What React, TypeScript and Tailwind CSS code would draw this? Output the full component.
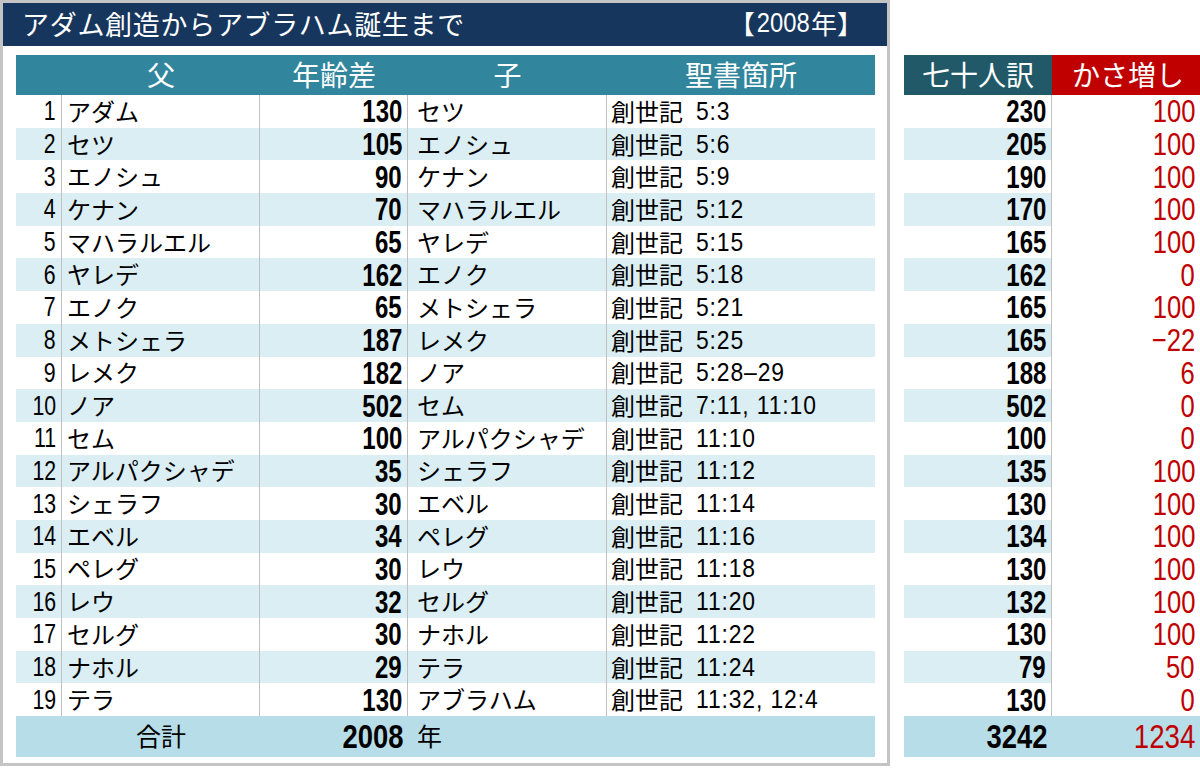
const jp = "font-['Noto_Sans_CJK_JP',sans-serif]"
const num = "font-['Liberation_Sans',Arial,sans-serif]"

const rows: [number, string, number, string, string, number, number][] = [
  [1, "アダム", 130, "セツ", "5:3", 230, 100],
  [2, "セツ", 105, "エノシュ", "5:6", 205, 100],
  [3, "エノシュ", 90, "ケナン", "5:9", 190, 100],
  [4, "ケナン", 70, "マハラルエル", "5:12", 170, 100],
  [5, "マハラルエル", 65, "ヤレデ", "5:15", 165, 100],
  [6, "ヤレデ", 162, "エノク", "5:18", 162, 0],
  [7, "エノク", 65, "メトシェラ", "5:21", 165, 100],
  [8, "メトシェラ", 187, "レメク", "5:25", 165, -22],
  [9, "レメク", 182, "ノア", "5:28–29", 188, 6],
  [10, "ノア", 502, "セム", "7:11, 11:10", 502, 0],
  [11, "セム", 100, "アルパクシャデ", "11:10", 100, 0],
  [12, "アルパクシャデ", 35, "シェラフ", "11:12", 135, 100],
  [13, "シェラフ", 30, "エベル", "11:14", 130, 100],
  [14, "エベル", 34, "ペレグ", "11:16", 134, 100],
  [15, "ペレグ", 30, "レウ", "11:18", 130, 100],
  [16, "レウ", 32, "セルグ", "11:20", 132, 100],
  [17, "セルグ", 30, "ナホル", "11:22", 130, 100],
  [18, "ナホル", 29, "テラ", "11:24", 79, 50],
  [19, "テラ", 130, "アブラハム", "11:32, 12:4", 130, 0],
]

const leftCols = "grid grid-cols-[46px_198px_148px_199px_268px]"
const rightCols = "grid grid-cols-[148px_148px]"

// condensed digits, squeezed toward the right edge of the cell
function Fig({ children, cls }: { children: React.ReactNode; cls: string }) {
  return <span className={`inline-block origin-right leading-none ${num} ${cls}`}>{children}</span>
}

const boldFig = "font-bold text-[32px] scale-x-[0.75]"
const redFig = "text-[32px] scale-x-[0.8]"

export default function App() {
  return (
    <div className={`flex w-[1200px] h-[768px] bg-white text-black ${jp}`}>
      {/* main table panel */}
      <div className="flex flex-col w-[890px] h-[766px] border-[3px] border-[#c4c4c4] bg-white">
        <div className="flex items-center justify-between h-[43px] bg-[#17365d] text-white pl-[19px] pr-[24px] pb-[3px]">
          <span className="text-[27px] leading-none tracking-[0.7px]">アダム創造からアブラハム誕生まで</span>
          <span className="flex items-center text-[26px] leading-none">
            【
            <span className={`inline-block -mx-[3px] scale-x-[0.85] ${num} text-[28px]`}>2008</span>
            年】
          </span>
        </div>

        <div className="mt-[9px] ml-[13px] w-[859px]">
          <div className={`${leftCols} h-[40px] bg-[#31859c] text-white text-[28px] leading-none`}>
            <div />
            <div className="flex items-center justify-center pb-[3px]">父</div>
            <div className="flex items-center justify-center pb-[3px]">年齢差</div>
            <div className="flex items-center justify-center pb-[3px]">子</div>
            <div className="flex items-center justify-center pb-[3px]">聖書箇所</div>
          </div>

          {rows.map(([n, father, diff, child, ref]) => (
            <div
              key={n}
              className={`${leftCols} h-[32.7px] leading-none ${n % 2 === 0 ? "bg-[#daeef3]" : "bg-white"}`}
            >
              <div className="flex items-center justify-end pr-[5px] border-r border-[#c0c0c0]">
                <Fig cls="text-[28px] scale-x-[0.76]">{n}</Fig>
              </div>
              <div className="flex items-center pl-[5px] pb-[1px] border-r border-[#c0c0c0] text-[24px]">{father}</div>
              <div className="flex items-center justify-end pr-[5px] border-r border-[#c0c0c0]">
                <Fig cls={boldFig}>{diff}</Fig>
              </div>
              <div className="flex items-center pl-[9px] pb-[1px] border-r border-[#c0c0c0] text-[24px]">{child}</div>
              <div className="flex items-center pl-[4px] pb-[1px] text-[24px]">
                創世記
                <span className={`inline-block ml-[13px] ${num} text-[26px] tracking-[1px] scale-x-[0.88] origin-left`}>
                  {ref}
                </span>
              </div>
            </div>
          ))}

          <div className={`${leftCols} h-[41px] bg-[#b7dee8] leading-none`}>
            <div />
            <div className="flex items-center justify-center pb-[2px] text-[25px]">合計</div>
            <div className="flex items-center justify-end pr-[5px]">
              <Fig cls="font-bold text-[33px] scale-x-[0.83]">2008</Fig>
            </div>
            <div className="flex items-center pl-[9px] pb-[2px] text-[25px]">年</div>
            <div />
          </div>
        </div>
      </div>

      {/* septuagint comparison */}
      <div className="ml-[14px] mt-[55px] w-[296px]">
        <div className={`${rightCols} h-[40px] text-white text-[28px] leading-none`}>
          <div className="flex items-center justify-center pb-[3px] bg-[#215968]">七十人訳</div>
          <div className="flex items-center justify-center pb-[3px] pl-[4px] bg-[#c00000]">かさ増し</div>
        </div>
        {rows.map(([n, , , , , lxx, extra]) => (
          <div key={n} className={`${rightCols} h-[32.7px]`}>
            <div
              className={`flex items-center justify-end pr-[5px] border-r border-[#c0c0c0] ${
                n % 2 === 0 ? "bg-[#daeef3]" : "bg-white"
              }`}
            >
              <Fig cls={boldFig}>{lxx}</Fig>
            </div>
            <div className="flex items-center justify-end pr-[5px] text-[#c00000]">
              <Fig cls={redFig}>{extra < 0 ? `−${-extra}` : extra}</Fig>
            </div>
          </div>
        ))}
        <div className={`${rightCols} h-[41px] bg-[#b7dee8]`}>
          <div className="flex items-center justify-end pr-[5px]">
            <Fig cls="font-bold text-[33px] scale-x-[0.83]">3242</Fig>
          </div>
          <div className="flex items-center justify-end pr-[5px] text-[#c00000]">
            <Fig cls="text-[33px] scale-x-[0.84]">1234</Fig>
          </div>
        </div>
      </div>
    </div>
  )
}
